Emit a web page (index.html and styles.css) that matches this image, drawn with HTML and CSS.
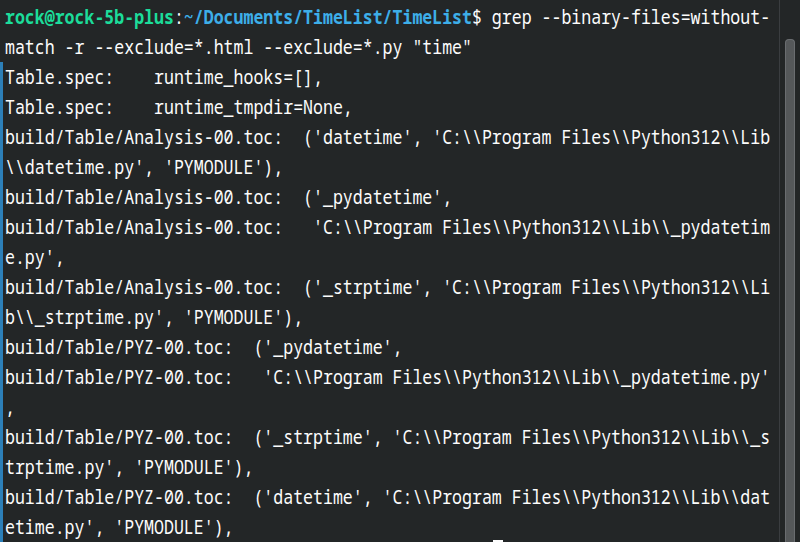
FILE: index.html
```html
<!DOCTYPE html>
<html>
<head>
<meta charset="utf-8">
<link rel="stylesheet" href="styles.css">
</head>
<body>
<div class="term">
  <div class="screen">
    <div class="lines">
      <div class="row"><span class="user">rock@rock-5b-plus</span>:<span class="path">~/Documents/TimeList/TimeList</span>$ grep --binary-files=without-</div>
      <div class="row">match -r --exclude=*.html --exclude=*.py "time"</div>
    </div>
    <div class="output">
      <div class="lines">
        <div class="row">Table.spec:    runtime_hooks=[],</div>
        <div class="row">Table.spec:    runtime_tmpdir=None,</div>
        <div class="row">build/Table/Analysis-00.toc:  ('datetime', 'C:\\Program Files\\Python312\\Lib</div>
        <div class="row">\\datetime.py', 'PYMODULE'),</div>
        <div class="row">build/Table/Analysis-00.toc:  ('_pydatetime',</div>
        <div class="row">build/Table/Analysis-00.toc:   'C:\\Program Files\\Python312\\Lib\\_pydatetim</div>
        <div class="row">e.py',</div>
        <div class="row">build/Table/Analysis-00.toc:  ('_strptime', 'C:\\Program Files\\Python312\\Li</div>
        <div class="row">b\\_strptime.py', 'PYMODULE'),</div>
        <div class="row">build/Table/PYZ-00.toc:  ('_pydatetime',</div>
        <div class="row">build/Table/PYZ-00.toc:   'C:\\Program Files\\Python312\\Lib\\_pydatetime.py'</div>
        <div class="row">,</div>
        <div class="row">build/Table/PYZ-00.toc:  ('_strptime', 'C:\\Program Files\\Python312\\Lib\\_s</div>
        <div class="row">trptime.py', 'PYMODULE'),</div>
        <div class="row">build/Table/PYZ-00.toc:  ('datetime', 'C:\\Program Files\\Python312\\Lib\\dat</div>
        <div class="row">etime.py', 'PYMODULE'),</div>
      </div>
    </div>
    <div class="cursor"></div>
  </div>
  <div class="scrollbar">
    <div class="thumb"></div>
  </div>
</div>
</body>
</html>
```

FILE: styles.css
```css
html, body {
  margin: 0;
  padding: 0;
  background: #232627;
  overflow: hidden;
}
.term {
  display: flex;
  width: 800px;
  height: 542px;
  background: #232627;
  overflow: hidden;
}
.screen {
  position: relative;
  width: 779px;
  padding-top: 2px;
  overflow: hidden;
}
.lines {
  padding-left: 5px;
}
.output {
  border-left: 3px solid #2c7fb8;
  height: 500px;
}
.output .lines {
  padding-left: 2px;
}
.row {
  font-family: "Noto Sans Mono", "DejaVu Sans Mono", monospace;
  font-size: 20px;
  line-height: 30px;
  height: 30px;
  white-space: pre;
  color: #fcfcfc;
  transform: scaleX(0.828);
  transform-origin: 0 0;
}
.user {
  color: #1cdc9a;
  font-weight: bold;
}
.path {
  color: #3daee9;
  font-weight: bold;
}
.cursor {
  position: absolute;
  left: 493px;
  top: 540px;
  width: 10px;
  height: 10px;
  background: #fcfcfc;
}
.scrollbar {
  width: 20px;
  border-left: 1px solid #3a3d40;
  display: flex;
  flex-direction: column;
  align-items: flex-start;
  padding-top: 39px;
}
.thumb {
  margin-left: 5px;
  width: 8px;
  flex: 1;
  border-radius: 4px 4px 0 0;
  background: #55585a;
  border: 1px solid #6a6d70;
  border-bottom: none;
}
```
